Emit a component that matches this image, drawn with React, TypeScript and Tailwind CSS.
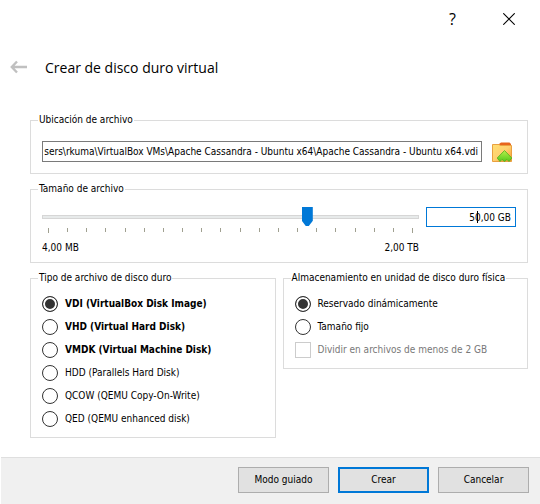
import { useState } from "react";
import type { ReactNode } from "react";

const diskTypes = [
  { id: "vdi", label: "VDI (VirtualBox Disk Image)", strong: true },
  { id: "vhd", label: "VHD (Virtual Hard Disk)", strong: true },
  { id: "vmdk", label: "VMDK (Virtual Machine Disk)", strong: true },
  { id: "hdd", label: "HDD (Parallels Hard Disk)", strong: false },
  { id: "qcow", label: "QCOW (QEMU Copy-On-Write)", strong: false },
  { id: "qed", label: "QED (QEMU enhanced disk)", strong: false },
];

const storageModes = [
  { id: "dynamic", label: "Reservado dinámicamente" },
  { id: "fixed", label: "Tamaño fijo" },
];

const ticks = Array.from({ length: 20 }, (_, i) => i);

function Group({ title, children }: { title: string; children: ReactNode }) {
  return (
    <fieldset className="min-w-0 border border-[#dcdcdc] px-[11px]">
      <legend className="-ml-1 px-px leading-[14px]">{title}</legend>
      {children}
    </fieldset>
  );
}

function Radio(props: {
  name: string;
  label: string;
  strong?: boolean;
  checked: boolean;
  onChange: () => void;
}) {
  return (
    <label className="flex h-[23px] items-center gap-[7px] whitespace-nowrap">
      <input
        type="radio"
        name={props.name}
        checked={props.checked}
        onChange={props.onChange}
        className="size-4 shrink-0 appearance-none rounded-full border border-[#333] bg-white checked:bg-[#333] checked:shadow-[inset_0_0_0_2px_#fff]"
      />
      <span className={props.strong ? "font-bold" : ""}>{props.label}</span>
    </label>
  );
}

function FolderIcon() {
  return (
    <svg viewBox="0 0 20 20" className="size-5" aria-hidden="true">
      <defs>
        <linearGradient id="folder" x1="0" y1="0" x2="1" y2="1">
          <stop offset="0" stopColor="#ffdf72" />
          <stop offset="0.5" stopColor="#ffd070" />
          <stop offset="1" stopColor="#f59a2c" />
        </linearGradient>
        <linearGradient id="arrow" x1="0" y1="0" x2="0" y2="1">
          <stop offset="0" stopColor="#b5f04a" />
          <stop offset="1" stopColor="#55c81c" />
        </linearGradient>
      </defs>
      <path d="M7 4V2L9 0.500H17.500L19 2V4Z" fill="#e8641c" />
      <path d="M0.500 2.500H7L8.500 3.500H19.500V19.500H0.500Z" fill="url(#folder)" stroke="#e9a040" />
      <path
        d="M12.500 8.500L19.800 16L17 19.500L15 17.500L12.500 19.500L10 17.500L8 19.500L5.200 16Z"
        fill="url(#arrow)"
        stroke="#4fae1c"
        strokeWidth="0.8"
      />
    </svg>
  );
}

const buttonBase = "h-[26px] w-[91px] bg-[#e1e1e1] text-center";

export default function App() {
  const [diskType, setDiskType] = useState("vdi");
  const [mode, setMode] = useState("dynamic");
  const [path, setPath] = useState(
    "sers\\rkuma\\VirtualBox VMs\\Apache Cassandra - Ubuntu x64\\Apache Cassandra - Ubuntu x64.vdi"
  );
  const [size, setSize] = useState("50,00 GB");
  const [position, setPosition] = useState(711);

  return (
    <div className="flex min-h-screen flex-col bg-white font-['DejaVu_Sans_Condensed','DejaVu_Sans',sans-serif] text-[10px] leading-[14px] text-black">
      <div className="flex h-[38px] items-center justify-end gap-[47px] pr-[25px]">
        <button type="button" aria-label="Ayuda" className="font-['Open_Sans',sans-serif] text-base">
          ?
        </button>
        <button type="button" aria-label="Cerrar">
          <svg viewBox="0 0 12 12" className="size-3" aria-hidden="true">
            <path d="M0.300 0.300L11.700 11.700M11.700 0.300L0.300 11.700" stroke="#000" strokeWidth="1.100" />
          </svg>
        </button>
      </div>

      <header className="flex h-[60px] items-center gap-[17px] pl-[10px]">
        <button type="button" aria-label="Atrás" disabled>
          <svg viewBox="0 0 18 16" className="h-4 w-[18px]" aria-hidden="true">
            <path d="M17 7H2M7 1.500L1.800 7L7 12.500" fill="none" stroke="#c0c0c0" strokeWidth="2.400" />
          </svg>
        </button>
        <h1 className="font-['Open_Sans',sans-serif] text-[14px] leading-5">Crear de disco duro virtual</h1>
      </header>

      <main className="flex flex-1 flex-col gap-2 pt-[15px] pr-3 pb-4 pl-[30px]">
        <Group title="Ubicación de archivo">
          <div className="flex items-center gap-[10px] pt-[14px] pr-1 pb-[11px]">
            <input
              type="text"
              aria-label="Ubicación de archivo"
              value={path}
              onChange={(e) => setPath(e.target.value)}
              className="h-[21px] min-w-0 flex-1 border border-[#7a7a7a] bg-white pr-[3px] text-right outline-none"
            />
            <button type="button" aria-label="Elegir ubicación">
              <FolderIcon />
            </button>
          </div>
        </Group>

        <Group title="Tamaño de archivo">
          <div className="flex items-start gap-[7px] pt-[11px] pb-[7px]">
            <div className="min-w-0 flex-1">
              <input
                type="range"
                aria-label="Tamaño de archivo"
                min={0}
                max={1000}
                value={position}
                onChange={(e) => setPosition(Number(e.target.value))}
                className="block h-5 w-full appearance-none bg-transparent [&::-webkit-slider-runnable-track]:h-1 [&::-webkit-slider-runnable-track]:border [&::-webkit-slider-runnable-track]:border-[#d6d6d6] [&::-webkit-slider-runnable-track]:bg-[#e7eaea] [&::-webkit-slider-thumb]:-mt-[9px] [&::-webkit-slider-thumb]:h-[19px] [&::-webkit-slider-thumb]:w-[11px] [&::-webkit-slider-thumb]:appearance-none [&::-webkit-slider-thumb]:bg-[#0078d7] [&::-webkit-slider-thumb]:[clip-path:polygon(0_0,100%_0,100%_72%,64%_100%,36%_100%,0_72%)]"
              />
              <div className="flex justify-between px-[6px] pt-px">
                {ticks.map((t) => (
                  <span key={t} className={t === 0 || t === 19 ? "h-[5px] w-px bg-[#a0a090]" : "h-1 w-px bg-[#a0a090]"} />
                ))}
              </div>
              <div className="flex justify-between pt-2">
                <span>4,00 MB</span>
                <span>2,00 TB</span>
              </div>
            </div>
            <div className="relative">
              <input
                type="text"
                aria-label="Tamaño"
                value={size}
                onChange={(e) => setSize(e.target.value)}
                className="block h-5 w-[90px] border border-[#0078d7] bg-white pr-1 text-right outline-none"
              />
              <span className="absolute top-1 right-[38px] h-3 w-px bg-black" />
            </div>
          </div>
        </Group>

        <div className="grid grid-cols-2 items-start gap-[7px]">
          <Group title="Tipo de archivo de disco duro">
            <div className="py-[7px]">
              {diskTypes.map((t) => (
                <Radio
                  key={t.id}
                  name="disk-type"
                  label={t.label}
                  strong={t.strong}
                  checked={diskType === t.id}
                  onChange={() => setDiskType(t.id)}
                />
              ))}
            </div>
          </Group>
          <Group title="Almacenamiento en unidad de disco duro física">
            <div className="py-[7px]">
              {storageModes.map((m) => (
                <Radio
                  key={m.id}
                  name="storage-mode"
                  label={m.label}
                  checked={mode === m.id}
                  onChange={() => setMode(m.id)}
                />
              ))}
              <label className="flex h-[23px] items-center gap-[7px] whitespace-nowrap text-[#787878]">
                <input type="checkbox" disabled className="size-4 shrink-0 appearance-none border border-[#ccc] bg-white" />
                <span>Dividir en archivos de menos de 2 GB</span>
              </label>
            </div>
          </Group>
        </div>
      </main>

      <footer className="ml-px flex justify-end gap-[9px] border-t border-[#dfdfdf] bg-[#f0f0f0] pt-[9px] pr-[11px] pb-[11px]">
        <button type="button" className={`${buttonBase} border border-[#adadad]`}>
          Modo guiado
        </button>
        <button type="button" className={`${buttonBase} border-2 border-[#0078d7]`}>
          Crear
        </button>
        <button type="button" className={`${buttonBase} border border-[#adadad]`}>
          Cancelar
        </button>
      </footer>
    </div>
  );
}
